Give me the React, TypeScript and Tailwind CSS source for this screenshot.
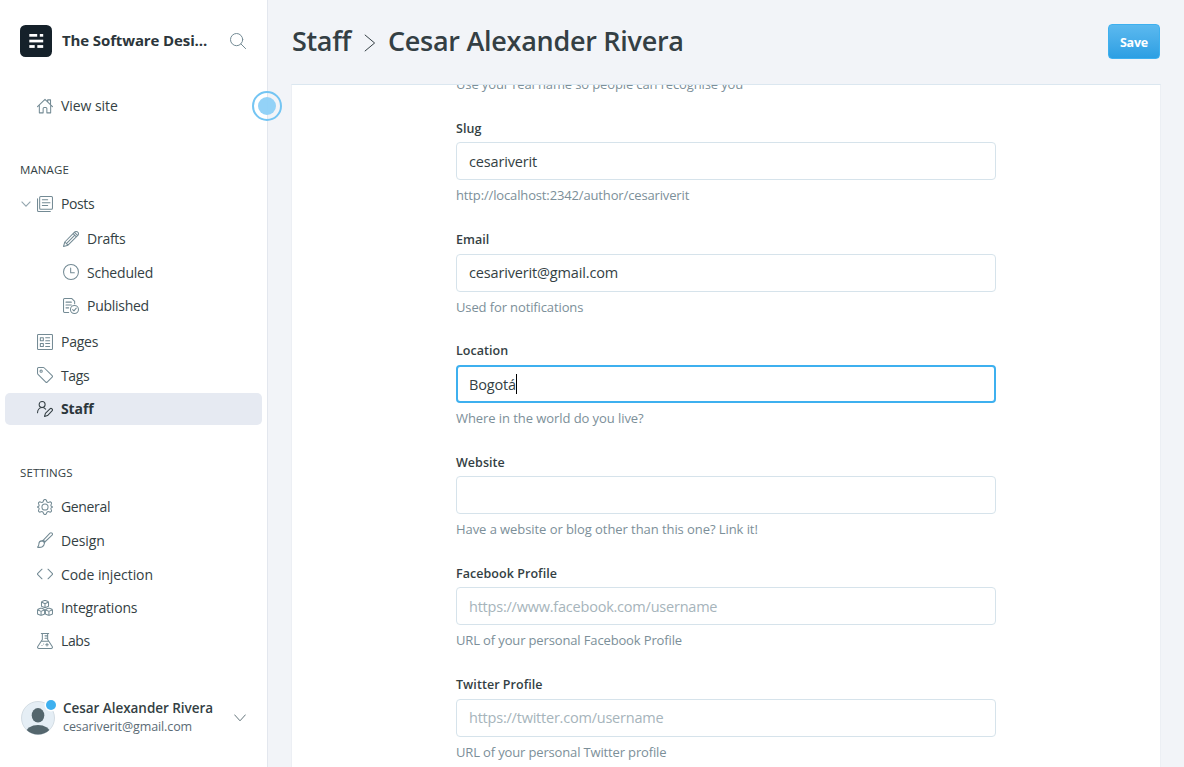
import type { ReactNode } from 'react';

const Icon = ({ children, className = 'text-[#738a94]' }: { children: ReactNode; className?: string }) => (
  <svg
    viewBox="0 0 24 24"
    className={`size-4 shrink-0 ${className}`}
    fill="none"
    stroke="currentColor"
    strokeWidth="1.55"
    strokeLinecap="round"
    strokeLinejoin="round"
  >
    {children}
  </svg>
);

const HomeIcon = () => (
  <Icon>
    <path d="M.8 13 12 2l11.200 11M3.500 11v11.300h5.700v-6.500a1.500 1.500 0 0 1 1.500-1.500h2.600a1.500 1.500 0 0 1 1.500 1.500v6.500h5.700V11M16 5.500V2.800h4.300v7" />
  </Icon>
);

const PostsIcon = () => (
  <Icon>
    <rect x="4" y=".8" width="19.200" height="19.200" rx="1.500" />
    <path d="M.8 4v17.700c0 .8.7 1.500 1.500 1.500H20M8 5.700h8M8 10h11.500M8 14.200h8" />
  </Icon>
);

const PencilIcon = () => (
  <Icon>
    <path d="M22.200 1.800a3.400 3.400 0 0 0-4.900 0L2.700 16.500.8 23.200l6.700-1.900L22.200 6.700a3.400 3.400 0 0 0 0-4.900ZM15.300 3.900l4.800 4.800M17.300 1.900l4.900 4.900M2.700 16.500l4.800 4.800M17.700 6.300 5.100 18.900" />
  </Icon>
);

const ClockIcon = () => (
  <Icon>
    <circle cx="12" cy="12" r="11.200" />
    <path d="M11.500 6v7H17" />
  </Icon>
);

const PublishedIcon = () => (
  <Icon>
    <path d="M8.500 21.700H2.300A1.500 1.500 0 0 1 .8 20.200V2.300A1.500 1.500 0 0 1 2.300.8h11l4.200 4.200v3.500M4.500 6.200h8M4.500 10.500h8M4.500 14.800h4" />
    <circle cx="17.200" cy="17.200" r="6" />
    <path d="m14.500 17.500 1.900 1.900 3.500-4.200" />
  </Icon>
);

const PagesIcon = () => (
  <Icon>
    <rect x=".8" y=".8" width="22.400" height="22.400" rx="1.200" />
    <path d="M5 5.500h4.500V10H5ZM5 14.200h4.500v4.500H5ZM13 5.500h6M13 10h6M13 14.200h6M13 18.700h6" />
  </Icon>
);

const TagIcon = () => (
  <Icon>
    <path d="M.8 2.300v7.200c0 .6.200 1.200.7 1.600l11.700 11.500a1.500 1.500 0 0 0 2.100 0l7.400-7.400a1.500 1.500 0 0 0 0-2.100L11 1.500A2.500 2.500 0 0 0 9.300.8h-7A1.500 1.500 0 0 0 .8 2.300Z" />
    <circle cx="6.200" cy="6.200" r="1.700" />
  </Icon>
);

const StaffIcon = () => (
  <Icon className="text-[#343f44]">
    <circle cx="7.700" cy="5.300" r="4.500" />
    <path d="M.8 17.500c0-4.300 2.900-7.700 6.900-7.700 2.200 0 4 .9 5.200 2.400M22.500 11.800a2.200 2.200 0 0 0-3.100 0l-6.800 6.800-1.300 4.500 4.500-1.300 6.700-6.900a2.200 2.200 0 0 0 0-3.100Z" />
  </Icon>
);

const GearIcon = () => (
  <Icon>
    <circle cx="12" cy="12" r="4.600" />
    <path d="m14.200 2.300.5 1.400a2.300 2.300 0 0 0 3 1.300l1.400-.6a2.100 2.100 0 0 1 2.600 2.700l-.6 1.300a2.300 2.300 0 0 0 1.200 3l1 .4a2.100 2.100 0 0 1 0 .4l-1 .4a2.300 2.300 0 0 0-1.200 3l.6 1.400a2.100 2.100 0 0 1-2.600 2.600l-1.400-.6a2.300 2.300 0 0 0-3 1.300l-.5 1.400a2.300 2.300 0 0 1-4.400 0l-.5-1.400a2.300 2.300 0 0 0-3-1.300l-1.400.6a2.100 2.100 0 0 1-2.600-2.600l.6-1.400a2.300 2.300 0 0 0-1.200-3l-1-.4v-.4l1-.4a2.300 2.300 0 0 0 1.200-3l-.6-1.300a2.100 2.100 0 0 1 2.600-2.700l1.400.6a2.300 2.300 0 0 0 3-1.300l.5-1.400a2.300 2.300 0 0 1 4.400 0Z" />
  </Icon>
);

const BrushIcon = () => (
  <Icon>
    <path d="M9.200 12.500 19.500 1.700a2.200 2.200 0 0 1 3.100 3.100L11.700 15M9.200 12.500c1.400.4 2.200 1.200 2.500 2.500M9.200 12.500l-2 .8M11.700 15l-.6 2M7.200 13.300c-3.600.2-4.500 2.500-4.400 5.200 0 1.500-.5 3-2 4.200 4.500 1 9.700.2 10.300-5.700-.2-2-1.700-3.500-3.900-3.700Z" />
  </Icon>
);

const CodeIcon = () => (
  <Icon>
    <path d="M7.500 4.800.8 11.500a.7.700 0 0 0 0 1l6.700 6.700M16.500 4.800l6.700 6.700a.7.700 0 0 1 0 1l-6.700 6.700" />
  </Icon>
);

const CUBE = 'M-.8-5.200h1.600L4.600-3.800 5.300-2.800V2.800L4.600 3.800.8 5.300H-.8L-4.600 3.800-5.300 2.800V-2.800L-4.600-3.800ZM-4.600-2.600 0-.6 4.600-2.600M0-.6V5';
const CubesIcon = () => (
  <Icon>
    <path transform="translate(12 6.100)" d={CUBE} />
    <path transform="translate(6.100 17.700)" d={CUBE} />
    <path transform="translate(17.900 17.700)" d={CUBE} />
  </Icon>
);

const FlaskIcon = () => (
  <Icon>
    <path d="M6.500.8h11M8 .8v9L1.200 20.300c-.9 1.400 0 2.900 1.500 2.900h18.600c1.500 0 2.400-1.500 1.500-2.900L16 9.800v-9M12 4.300h4M12 8h4M6.500 12.500h11M15 15.500v4M13 17.500h4M7.500 18.800v.1M10 16.500v.1" />
  </Icon>
);

const NavItem = ({ icon, label, tracking = 'tracking-[-0.12px]' }: { icon: ReactNode; label: string; tracking?: string }) => (
  <a className="flex h-[33.6px] items-center gap-2 pl-8 text-[14px] text-[#343f44]">
    {icon}
    <span className={tracking}>{label}</span>
  </a>
);

const SubItem = ({ icon, label, tracking }: { icon: ReactNode; label: string; tracking: string }) => (
  <a className="flex h-[33.6px] items-center gap-2 pl-[58px] text-[14px] text-[#343f44]">
    {icon}
    <span className={tracking}>{label}</span>
  </a>
);

const SectionTitle = ({ children }: { children: ReactNode }) => (
  <h2 className="pl-[15px] text-[11.5px] leading-5 tracking-[0.1px] text-[#343f44]">{children}</h2>
);

function Sidebar() {
  return (
    <nav className="relative flex w-[268px] shrink-0 flex-col border-r border-[#e3e7ee] bg-white px-[5px]">
      <header className="flex h-[57px] items-end pl-[15px]">
        <svg viewBox="0 0 32 32" className="size-8 shrink-0">
          <rect width="32" height="32" rx="5.500" fill="#15212a" />
          <g fill="#fff">
            <rect x="9.300" y="9" width="7.900" height="2.700" />
            <rect x="19.800" y="9" width="3.400" height="2.700" />
            <rect x="9.300" y="14.700" width="13.900" height="2.700" />
            <rect x="9.300" y="20.100" width="5.400" height="2.800" />
            <rect x="17.300" y="20.100" width="5.900" height="2.800" />
          </g>
        </svg>
        <span className="mb-px ml-[10px] w-[168px] text-[15px] leading-8 font-bold tracking-[-0.12px] text-[#2c363b]">
          The Software Desi...
        </span>
        <svg viewBox="0 0 16 16" className="mb-2 size-4" fill="none" stroke="#738a94" strokeWidth="1" strokeLinecap="round">
          <circle cx="6.600" cy="6.600" r="6.100" />
          <path d="m11 11 4.600 4.600" />
        </svg>
      </header>

      <div className="mt-[32.200px]">
        <NavItem icon={<HomeIcon />} label="View site" tracking="tracking-[-0.05px]" />
      </div>

      <div className="mt-[37.200px]">
        <SectionTitle>MANAGE</SectionTitle>
      </div>
      <div className="mt-[7px] flex flex-col">
        <div className="flex items-center">
          <svg viewBox="0 0 10 6" className="mt-px -mr-[26px] ml-[16px] h-1.5 w-2.5" fill="none" stroke="#94a6af" strokeWidth="1.1">
            <path d="m.6.700 4.400 4.400L9.400.700" />
          </svg>
          <NavItem icon={<PostsIcon />} label="Posts" tracking="tracking-[-0.4px]" />
        </div>
        <div className="mt-[1.400px] mb-[2px]">
          <SubItem icon={<PencilIcon />} label="Drafts" tracking="tracking-[-0.25px]" />
          <SubItem icon={<ClockIcon />} label="Scheduled" tracking="tracking-[-0.2px]" />
          <SubItem icon={<PublishedIcon />} label="Published" tracking="tracking-[-0.28px]" />
        </div>
        <NavItem icon={<PagesIcon />} label="Pages" tracking="tracking-[-0.25px]" />
        <NavItem icon={<TagIcon />} label="Tags" tracking="tracking-[-0.4px]" />
        <a className="mt-[0.8px] flex h-8 items-center gap-2 rounded-[5px] bg-[#e6eaf2] pl-8 text-[14px] font-bold text-[#2c363b]">
          <StaffIcon />
          <span className="tracking-[-0.1px]">Staff</span>
        </a>
      </div>

      <div className="mt-[38px]">
        <SectionTitle>SETTINGS</SectionTitle>
      </div>
      <div className="mt-[7.300px] flex flex-col">
        <NavItem icon={<GearIcon />} label="General" tracking="tracking-[-0.35px]" />
        <NavItem icon={<BrushIcon />} label="Design" />
        <NavItem icon={<CodeIcon />} label="Code injection" tracking="tracking-[-0.08px]" />
        <NavItem icon={<CubesIcon />} label="Integrations" tracking="tracking-[-0.2px]" />
        <div className="-mt-[0.300px]">
          <NavItem icon={<FlaskIcon />} label="Labs" tracking="tracking-[-0.4px]" />
        </div>
      </div>

      <footer className="mt-auto mb-[31px] flex items-center pl-4">
        <svg viewBox="0 0 36 36" className="size-9 shrink-0">
          <defs>
            <clipPath id="avatar">
              <circle cx="17" cy="19" r="16.500" />
            </clipPath>
          </defs>
          <circle cx="17" cy="19" r="16.500" fill="#e5eef5" stroke="#ccd6dd" strokeWidth=".8" />
          <g clipPath="url(#avatar)" fill="#54666d">
            <ellipse cx="17" cy="16.300" rx="6.300" ry="7.300" />
            <ellipse cx="17" cy="34" rx="12" ry="8" />
          </g>
          <circle cx="30" cy="6" r="6.500" fill="#fff" />
          <circle cx="30" cy="6" r="5" fill="#3eb0ef" />
        </svg>
        <div className="ml-[6px] flex w-[171px] flex-col pt-0.5">
          <span className="-mt-px mb-px text-[13.5px] leading-[18px] font-semibold tracking-[-0.04px] text-[#343f44]">
            Cesar Alexander Rivera
          </span>
          <span className="text-[12.5px] leading-[18px] tracking-[-0.11px] text-[#5b6b75]">cesariverit@gmail.com</span>
        </div>
        <svg viewBox="0 0 12 8" className="mt-0.5 h-2 w-3" fill="none" stroke="#54666d" strokeWidth=".9">
          <path d="m.4.600 5.600 6.200L11.600.600" />
        </svg>
      </footer>

      <div className="absolute top-[91px] -right-[15px] flex size-[30px] items-center justify-center rounded-full border-2 border-[#74c5f3]">
        <div className="size-[18px] rounded-full bg-[#8dd0f7]/95" />
      </div>
    </nav>
  );
}

type FieldProps = { label: string; value?: string; placeholder?: string; hint: string; focused?: boolean; hintTracking: string };

function Field({ label, value, placeholder, hint, focused, hintTracking }: FieldProps) {
  return (
    <div className="h-[111.25px]">
      <div className="h-6 pt-[0.500px] text-[12.5px] leading-5 font-semibold tracking-[0.05px] text-[#343f44]">{label}</div>
      <div
        className={
          focused
            ? 'flex h-[38px] items-center rounded-[4px] border-2 border-[#3eb0ef] bg-white px-[11px] pt-px text-[14.5px]'
            : 'flex h-[38px] items-center rounded-[4px] border border-[#d6e3eb] bg-white px-3 pt-[1.3px] text-[14.5px]'
        }
      >
        {value && <span className="tracking-[-0.16px] text-[#343f44]">{value}</span>}
        {placeholder && <span className="tracking-[-0.22px] text-[#a6b4bb]">{placeholder}</span>}
        {focused && <span className="h-5 w-px bg-black" />}
      </div>
      <div className={`mt-[5px] text-[13px] leading-5 text-[#7c8f99] ${hintTracking}`}>{hint}</div>
    </div>
  );
}

export default function App() {
  return (
    <div className="flex h-[767px] w-[1184px] overflow-hidden bg-[#f2f4f8] font-['Open_Sans','Noto_Sans',sans-serif]">
      <Sidebar />
      <main className="flex min-w-0 flex-1 flex-col pr-[23px] pl-[23px]">
        <header className="flex h-[84px] shrink-0 items-center justify-between pr-px pb-px pl-px">
          <h1 className="flex items-center text-[27px] font-semibold text-[#343f44]">
            <span className="w-[72px] tracking-[-0.35px]">Staff</span>
            <svg viewBox="0 0 12 18" className="mt-0.5 mr-[12px] h-[18px] w-3" fill="none" stroke="#343f44" strokeWidth="1">
              <path d="m.8.800 9.800 8.200L.8 17.200" />
            </svg>
            <span className="tracking-[-0.28px]">Cesar Alexander Rivera</span>
          </h1>
          <button className="h-[35px] w-[52px] rounded-[4px] border border-[#3eb0ef] bg-linear-to-b from-[#5bb9ef] to-[#2b9fe3] pt-[3px] text-[12.5px] font-bold tracking-[-0.2px] text-white">
            Save
          </button>
        </header>
        <section className="flex flex-1 flex-col items-center overflow-hidden border border-b-0 border-t-[#dbe7f0] border-r-[#eceff4] border-l-[#eceff4] bg-white">
          <div className="-mt-[10.850px] w-[540px]">
            <p className="mb-[24.250px] text-[13px] leading-5 tracking-[-0.13px] text-[#7c8f99]">
              Use your real name so people can recognise you
            </p>
            <Field label="Slug" value="cesariverit" hint="http://localhost:2342/author/cesariverit" hintTracking="tracking-[-0.14px]" />
            <Field label="Email" value="cesariverit@gmail.com" hint="Used for notifications" hintTracking="tracking-[-0.12px]" />
            <Field label="Location" value="Bogotá" hint="Where in the world do you live?" hintTracking="tracking-[-0.07px]" focused />
            <Field label="Website" hint="Have a website or blog other than this one? Link it!" hintTracking="tracking-[-0.07px]" />
            <Field label="Facebook Profile" placeholder="https://www.facebook.com/username" hint="URL of your personal Facebook Profile" hintTracking="tracking-[-0.14px]" />
            <Field label="Twitter Profile" placeholder="https://twitter.com/username" hint="URL of your personal Twitter profile" hintTracking="tracking-[-0.15px]" />
          </div>
        </section>
      </main>
    </div>
  );
}
